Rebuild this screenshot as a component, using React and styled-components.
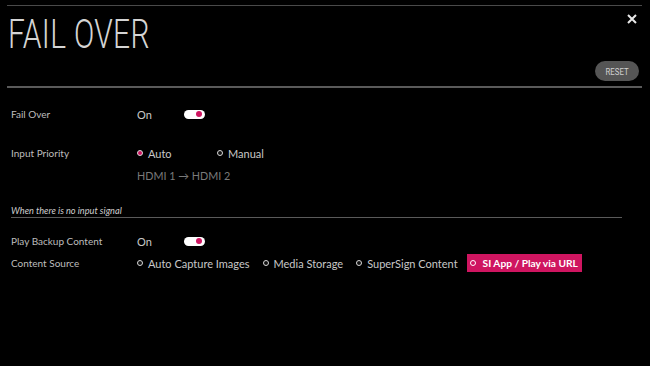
import React from 'react'
import styled, { createGlobalStyle } from 'styled-components'

const PINK = '#cf1560'

const Global = createGlobalStyle`
  html, body {
    margin: 0;
    padding: 0;
    background: #000;
  }
  body {
    width: 650px;
    height: 366px;
    overflow: hidden;
    font-family: "Lato", "Open Sans", sans-serif;
  }
`

const Page = styled.div`
  width: 650px;
  height: 366px;
  background: #000;
  padding: 5px 8px 0 7px;
  box-sizing: border-box;
`

const Header = styled.div`
  border-top: 1px solid #4a4a4a;
  border-bottom: 2px solid #5a5a5a;
`

const TitleRow = styled.div`
  display: flex;
  justify-content: space-between;
  align-items: flex-start;
  height: 55px;
`

const Title = styled.h1`
  margin: 6px 0 0 1px;
  font-family: "Roboto", sans-serif;
  font-weight: 300;
  font-size: 41px;
  line-height: 44px;
  color: #d4d4d4;
  letter-spacing: 0.5px;
  transform: scaleX(0.73);
  transform-origin: left center;
  white-space: nowrap;
`

const Close = styled.div`
  margin: 7px 4px 0 0;
  width: 12px;
  height: 12px;
  display: flex;
  align-items: center;
  justify-content: center;
`

const ResetRow = styled.div`
  display: flex;
  justify-content: flex-end;
  padding-bottom: 5px;
`

const Reset = styled.div`
  width: 44px;
  height: 20px;
  border-radius: 10px;
  background: #555;
  color: #d0d0d0;
  font-family: "Roboto", sans-serif;
  font-size: 9.5px;
  display: flex;
  align-items: center;
  justify-content: center;
  margin-right: 3px;

  span {
    display: inline-block;
    transform: scaleX(0.82);
  }
`

const Body = styled.div`
  padding: 0 0 0 4px;
`

const Row = styled.div`
  display: grid;
  grid-template-columns: 126px 1fr;
  align-items: center;
  height: ${p => p.h || 22}px;
  margin-top: ${p => p.mt || 0}px;
`

const Label = styled.div`
  font-size: 10px;
  color: #bdbdbd;
`

const Value = styled.div`
  display: flex;
  align-items: center;
  font-size: 11px;
  color: #c8c8c8;
`

const OnText = styled.span`
  width: 47px;
`

const Toggle = styled.div`
  width: 21px;
  height: 9px;
  border-radius: 5px;
  background: #fff;
  display: flex;
  align-items: center;
  justify-content: flex-end;
  padding-right: 3px;
  box-sizing: border-box;

  &::after {
    content: '';
    width: 6px;
    height: 6px;
    border-radius: 50%;
    background: ${PINK};
  }
`

const Option = styled.div`
  display: flex;
  align-items: center;
  gap: ${p => (p.focus ? 7 : 5)}px;
  height: 18px;
  padding: 0 ${p => (p.focus ? 4 : 0)}px 0 ${p => (p.focus ? 3 : 0)}px;
  margin: 0 ${p => p.gap || 0}px 0 ${p => (p.focus ? -4 : 0)}px;
  min-width: ${p => p.w || 0}px;
  background: ${p => (p.focus ? PINK : 'transparent')};
  color: ${p => (p.focus ? '#fff' : '#c8c8c8')};
  font-weight: ${p => (p.focus ? 700 : 400)};
  font-size: ${p => (p.focus ? '10.2px' : 'inherit')};
`

const Dot = styled.span`
  width: 4px;
  height: 4px;
  border-radius: 50%;
  border: 1.5px solid ${p => (p.focus ? '#fff' : '#d8d8d8')};
  background: ${p => (p.on || p.focus ? PINK : '#111')};
  flex-shrink: 0;
`

const Sub = styled.div`
  font-size: 10.8px;
  color: #7a7a7a;
`

const Section = styled.div`
  margin-top: 19px;
  width: 611px;
  border-bottom: 1px solid #5a5a5a;
  padding-bottom: 1px;
  font-size: 9.2px;
  line-height: 11px;
  font-style: italic;
  color: #cfcfcf;
`

export default function App() {
  return (
    <Page>
      <Global />
      <Header>
        <TitleRow>
          <Title>FAIL OVER</Title>
          <Close>
            <svg width="10" height="10" viewBox="0 0 10 10">
              <path d="M1 1L9 9M9 1L1 9" stroke="#e8e8e8" strokeWidth="2" />
            </svg>
          </Close>
        </TitleRow>
        <ResetRow>
          <Reset><span>RESET</span></Reset>
        </ResetRow>
      </Header>
      <Body>
        <Row mt={15}>
          <Label>Fail Over</Label>
          <Value>
            <OnText>On</OnText>
            <Toggle />
          </Value>
        </Row>
        <Row mt={17}>
          <Label>Input Priority</Label>
          <Value>
            <Option w={80}><Dot on />Auto</Option>
            <Option><Dot />Manual</Option>
          </Value>
        </Row>
        <Row h={22}>
          <span />
          <Sub>HDMI 1 → HDMI 2</Sub>
        </Row>
        <Section>When there is no input signal</Section>
        <Row mt={12}>
          <Label>Play Backup Content</Label>
          <Value>
            <OnText>On</OnText>
            <Toggle />
          </Value>
        </Row>
        <Row h={22}>
          <Label>Content Source</Label>
          <Value>
            <Option gap={13}><Dot />Auto Capture Images</Option>
            <Option gap={13}><Dot />Media Storage</Option>
            <Option gap={13}><Dot />SuperSign Content</Option>
            <Option focus><Dot focus />SI App / Play via URL</Option>
          </Value>
        </Row>
      </Body>
    </Page>
  )
}
